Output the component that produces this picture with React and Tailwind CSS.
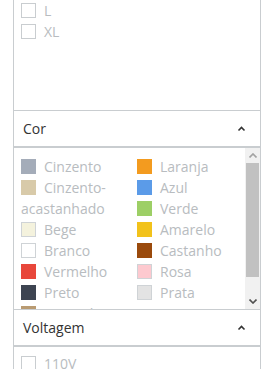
import React from "react";

const COLORS_LEFT = [
  { name: "Cinzento", hex: "#a4acb9" },
  { name: "Cinzento-acastanhado", hex: "#d8caa9" },
  { name: "Bege", hex: "#f4f2dd", edge: true },
  { name: "Branco", hex: "#ffffff", edge: true },
  { name: "Vermelho", hex: "#e8473b" },
  { name: "Preto", hex: "#3d4451" },
  { name: "Dourado", hex: "#b99b72" },
];

const COLORS_RIGHT = [
  { name: "Laranja", hex: "#f39b1f" },
  { name: "Azul", hex: "#5b9be8" },
  { name: "Verde", hex: "#9dcf66" },
  { name: "Amarelo", hex: "#f2c21b" },
  { name: "Castanho", hex: "#9a4a0c" },
  { name: "Rosa", hex: "#fdc9cf", edge: true },
  { name: "Prata", hex: "#e3e3e3", edge: true },
];

function ChevronUp() {
  return (
    <svg width="9" height="6" viewBox="0 0 9 6" className="shrink-0">
      <path d="M1.5 4.5 L4.5 1.5 L7.5 4.5" fill="none" stroke="#333" strokeWidth="1.6" />
    </svg>
  );
}

function Check({ label }) {
  return (
    <div className="flex items-center h-[21px]">
      <span className="w-[15px] h-[15px] border border-[#c9cdd0] bg-white mr-2 shrink-0" />
      <span className="text-[#b8bcc0]">{label}</span>
    </div>
  );
}

function Swatch({ c }) {
  return (
    <div className="leading-[21px]">
      <span
        className={`inline-block w-[15px] h-[15px] align-[-2px] mr-2 ${c.edge ? "border border-[#cfd3d6]" : ""}`}
        style={{ background: c.hex }}
      />
      {c.name}
    </div>
  );
}

function Header({ title }) {
  return (
    <div className="h-[37px] flex items-center justify-between pl-[9px] pr-[14px] border-b-2 border-[#c9cdd0] text-[#333] text-[14px]">
      <span>{title}</span>
      <ChevronUp />
    </div>
  );
}

/* barra de rolagem desenhada (o navegador headless esconde a nativa) */
function Scrollbar() {
  return (
    <div className="w-[15px] shrink-0 bg-[#f1f1f1] flex flex-col">
      <div className="h-[15px] flex items-center justify-center">
        <svg width="8" height="5" viewBox="0 0 8 5">
          <path d="M0.5 4.5 L4 1 L7.5 4.5" fill="none" stroke="#a3a3a3" strokeWidth="1.6" />
        </svg>
      </div>
      <div className="flex-1 flex flex-col">
        <div className="h-[114px] mx-[1px] bg-[#c1c1c1]" />
      </div>
      <div className="h-[15px] flex items-center justify-center">
        <svg width="8" height="5" viewBox="0 0 8 5">
          <path d="M0.5 0.5 L4 4 L7.5 0.5" fill="none" stroke="#505050" strokeWidth="1.6" />
        </svg>
      </div>
    </div>
  );
}

export default function App() {
  return (
    <div className="w-[267px] h-[369px] overflow-hidden bg-white font-['Open_Sans',sans-serif] text-[14px]">
      <div className="ml-[13px] w-[248px] border-x border-[#c9cdd0]">
        {/* tamanhos */}
        <div className="h-[110px] pl-[7px]">
          <Check label="L" />
          <Check label="XL" />
        </div>

        <div className="border-t border-[#c9cdd0]">
          <Header title="Cor" />
          <div className="h-[161px] flex overflow-hidden text-[#b8bcc0]">
            <div className="flex-1 flex pl-[7px] pt-[8px]">
              <div className="w-[116px]">
                {COLORS_LEFT.map((c) => (
                  <Swatch key={c.name} c={c} />
                ))}
              </div>
              <div className="w-[100px]">
                {COLORS_RIGHT.map((c) => (
                  <Swatch key={c.name} c={c} />
                ))}
              </div>
            </div>
            <Scrollbar />
          </div>
        </div>

        <div className="border-t border-[#c9cdd0]">
          <Header title="Voltagem" />
          <div className="pl-[7px] pt-[6px]">
            <Check label="110V" />
            <Check label="220V" />
          </div>
        </div>
      </div>
    </div>
  );
}
